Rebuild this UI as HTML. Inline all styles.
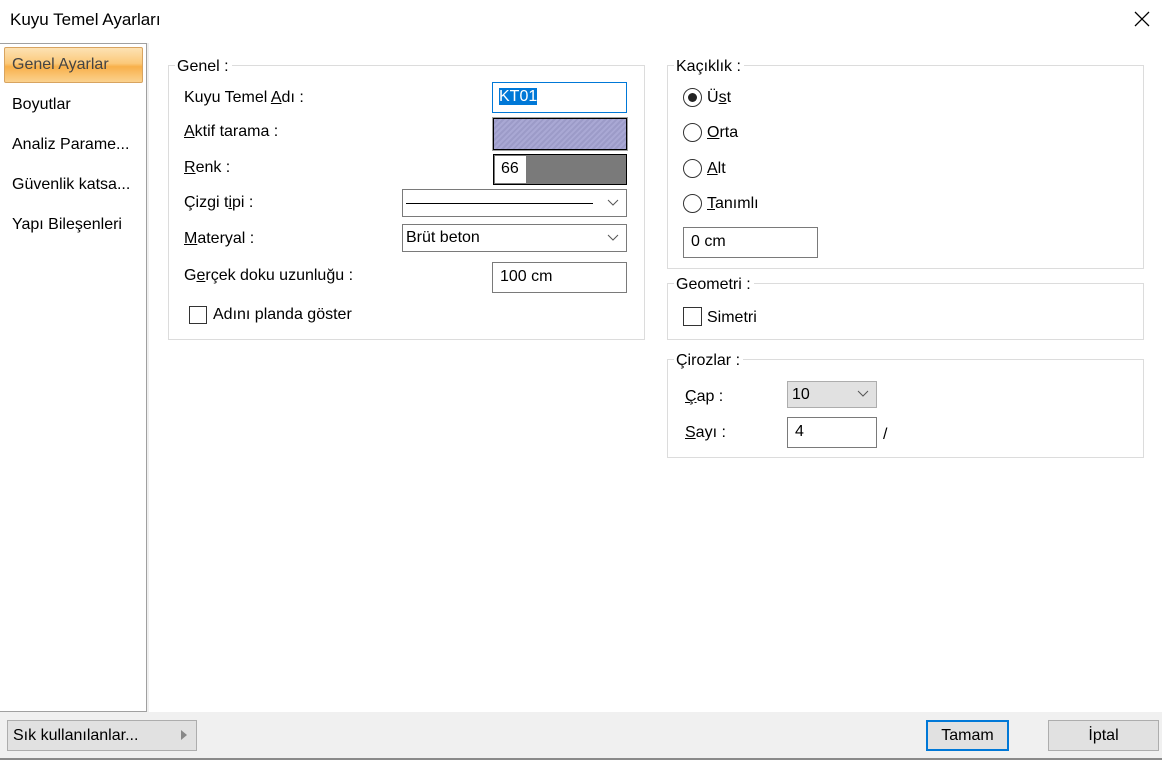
<!DOCTYPE html>
<html><head><meta charset="utf-8"><style>
*{margin:0;padding:0;box-sizing:border-box}
body{width:1162px;height:760px;background:#fff;font-family:"Liberation Sans","DejaVu Sans",sans-serif;font-size:16px;color:#000;position:relative;overflow:hidden}
.a{position:absolute;white-space:nowrap}
.grp{position:absolute;border:1px solid #dcdcdc}
.lg{position:absolute;background:#fff;padding:0 3px 0 2px;line-height:18px}
.inp{position:absolute;border:1px solid #7a7a7a;background:#fff;padding-left:7px;line-height:26px}
.rad{position:absolute;width:19px;height:19px;border:1px solid #333;border-radius:50%;background:#fff}
.chk{position:absolute;width:19px;height:19px;border:1px solid #333;background:#fff}
.btn{position:absolute;background:#e1e1e1;border:1px solid #adadad;text-align:center;line-height:29px}
u{text-decoration:underline}
</style></head><body>
<div class="a" style="left:10px;top:10px;font-size:17px">Kuyu Temel Ayarları</div>
<svg class="a" style="left:1134px;top:11px" width="16" height="16"><path d="M1 1L15 15M15 1L1 15" stroke="#000" stroke-width="1.3"/></svg>

<div class="a" style="left:0;top:43px;width:147px;height:669px;border:1px solid #a0a0a0;border-left:none;background:#fff"></div>
<div class="a" style="left:147px;top:43px;width:2px;height:669px;background:#f0f0f0"></div>
<div class="a" style="left:4px;top:47px;width:139px;height:36px;border:1px solid #d8a460;border-radius:2px;background:linear-gradient(#fde2b4 0%,#fbc97a 45%,#f8b04a 55%,#fbd28e 100%)"></div>
<div class="a" style="left:12px;top:56px;color:#444">Genel Ayarlar</div>
<div class="a" style="left:12px;top:96px">Boyutlar</div>
<div class="a" style="left:12px;top:136px">Analiz Parame...</div>
<div class="a" style="left:12px;top:176px">Güvenlik katsa...</div>
<div class="a" style="left:12px;top:216px">Yapı Bileşenleri</div>

<div class="grp" style="left:168px;top:65px;width:477px;height:275px"></div>
<div class="lg" style="left:175px;top:58px">Genel :</div>
<div class="a" style="left:184px;top:89px">Kuyu Temel <u>A</u>dı :</div>
<div class="a" style="left:184px;top:123px"><u>A</u>ktif tarama :</div>
<div class="a" style="left:184px;top:159px"><u>R</u>enk :</div>
<div class="a" style="left:184px;top:194px">Çizgi t<u>i</u>pi :</div>
<div class="a" style="left:184px;top:230px"><u>M</u>ateryal :</div>
<div class="a" style="left:184px;top:267px">G<u>e</u>rçek doku uzunluğu :</div>
<div class="chk" style="left:189px;top:306px;width:18px;height:18px"></div>
<div class="a" style="left:213px;top:306px">Adını planda göster</div>

<div class="inp" style="left:492px;top:82px;width:135px;height:31px;border-color:#0078d7;padding-left:6px;line-height:28px"><span style="background:#0078d7;color:#fff">KT01</span></div>
<div class="a" style="left:493px;top:118px;width:134px;height:32px;border:1px solid #000;outline:1px solid #a0a0a0;background:repeating-linear-gradient(135deg,#a9a8d4 0 2px,#9c9bc8 2px 4px)"></div>
<div class="a" style="left:493px;top:154px;width:134px;height:31px;border:1px solid #000;background:#7a7a7a"></div>
<div class="a" style="left:495px;top:156px;width:31px;height:27px;background:#fff;line-height:26px;padding-left:6px">66</div>
<div class="inp" style="left:402px;top:189px;width:225px;height:28px"></div>
<div class="a" style="left:406px;top:203px;width:187px;height:1px;background:#000"></div>
<svg class="a" style="left:607px;top:199px" width="12" height="8"><path d="M1 1L6 6L11 1" stroke="#555" fill="none"/></svg>
<div class="inp" style="left:402px;top:224px;width:225px;height:28px;padding-left:3px">Brüt beton</div>
<svg class="a" style="left:607px;top:234px" width="12" height="8"><path d="M1 1L6 6L11 1" stroke="#555" fill="none"/></svg>
<div class="inp" style="left:492px;top:262px;width:135px;height:31px;line-height:27px">100 cm</div>

<div class="grp" style="left:667px;top:65px;width:477px;height:204px"></div>
<div class="lg" style="left:674px;top:58px">Kaçıklık :</div>
<div class="rad" style="left:683px;top:88px"><div style="position:absolute;left:4px;top:4px;width:9px;height:9px;border-radius:50%;background:#222"></div></div>
<div class="a" style="left:707px;top:89px">Ü<u>s</u>t</div>
<div class="rad" style="left:683px;top:123px"></div>
<div class="a" style="left:707px;top:124px"><u>O</u>rta</div>
<div class="rad" style="left:683px;top:159px"></div>
<div class="a" style="left:707px;top:160px"><u>A</u>lt</div>
<div class="rad" style="left:683px;top:194px"></div>
<div class="a" style="left:707px;top:195px"><u>T</u>anımlı</div>
<div class="inp" style="left:683px;top:227px;width:135px;height:31px;line-height:27px">0 cm</div>

<div class="grp" style="left:667px;top:283px;width:477px;height:57px"></div>
<div class="lg" style="left:674px;top:276px">Geometri :</div>
<div class="chk" style="left:683px;top:307px"></div>
<div class="a" style="left:707px;top:309px">Simetri</div>

<div class="grp" style="left:667px;top:359px;width:477px;height:99px"></div>
<div class="lg" style="left:674px;top:352px">Çirozlar :</div>
<div class="a" style="left:685px;top:388px"><u>Ç</u>ap :</div>
<div class="a" style="left:787px;top:381px;width:90px;height:27px;background:#e1e1e1;border:1px solid #adadad;line-height:25px;padding-left:4px">10</div>
<svg class="a" style="left:857px;top:390px" width="12" height="8"><path d="M1 1L6 6L11 1" stroke="#555" fill="none"/></svg>
<div class="a" style="left:685px;top:424px"><u>S</u>ayı :</div>
<div class="inp" style="left:787px;top:417px;width:90px;height:31px;line-height:28px">4</div>
<div class="a" style="left:883px;top:426px">/</div>

<div class="a" style="left:0;top:712px;width:1162px;height:48px;background:#f0f0f0"></div>
<div class="a" style="left:0;top:758px;width:1162px;height:2px;background:#8a8a8a"></div>
<div class="btn" style="left:7px;top:720px;width:190px;height:31px;text-align:left;padding-left:5px">Sık kullanılanlar...</div>
<svg class="a" style="left:180px;top:729px" width="8" height="12"><path d="M1 1L7 6L1 11Z" fill="#888"/></svg>
<div class="btn" style="left:926px;top:720px;width:83px;height:31px;border:2px solid #0078d7;line-height:27px">Tamam</div>
<div class="btn" style="left:1048px;top:720px;width:111px;height:31px">İptal</div>
</body></html>
